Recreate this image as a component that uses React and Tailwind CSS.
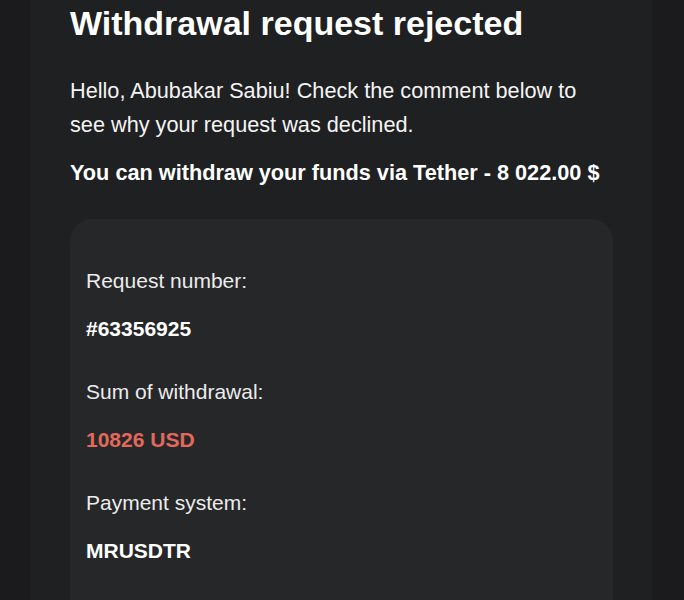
import React from 'react';

const Field = ({ label, value, valueClass = 'text-white' }) => (
    <div className="flex flex-col">
        <span className="text-[21px] leading-[30px] text-[#ececec]">{label}</span>
        <span className={`mt-[18px] text-[21px] leading-[30px] font-bold ${valueClass}`}>{value}</span>
    </div>
);

const App = () => {
    return (
        <div
            className="h-[600px] w-[684px] overflow-hidden bg-[#1b1b1d] flex"
            style={{ fontFamily: '"Liberation Sans", Arial, sans-serif' }}
        >
            <div className="ml-[30px] w-[622px] h-full bg-[#1f2022] pl-[40px] pr-[39px] pt-[3px] flex flex-col">
                {/* Heading */}
                <h1 className="text-[34px] leading-[40px] font-bold text-white">
                    Withdrawal request rejected
                </h1>

                <p className="mt-[31px] max-w-[515px] text-[21.7px] leading-[34px] text-[#f4f4f4]">
                    Hello, Abubakar Sabiu! Check the comment below to see why your request was declined.
                </p>

                <p className="mt-[14px] text-[21.7px] leading-[34px] font-bold text-white">
                    You can withdraw your funds via Tether - 8 022.00 $
                </p>

                {/* Details card */}
                <div className="mt-[29px] rounded-[22px] bg-[#262729] pl-[16px] pt-[47px] pb-10 flex flex-col gap-[33px] min-h-[500px]">
                    <Field label="Request number:" value="#63356925" />
                    <Field label="Sum of withdrawal:" value="10826 USD" valueClass="text-[#e2695b]" />
                    <Field label="Payment system:" value="MRUSDTR" />
                </div>
            </div>
        </div>
    );
};

export default App;
